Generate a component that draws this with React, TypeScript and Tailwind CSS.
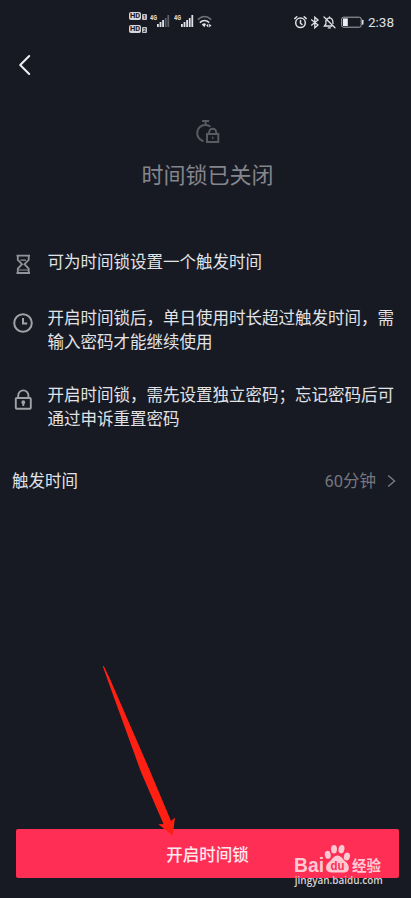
import type { ReactNode } from 'react';

function HdBadge({ slot }: { slot: string }) {
  return (
    <div className="flex h-[9px] items-center gap-[1px]">
      <span className="flex h-[8px] w-[12px] items-center justify-center rounded-[2px] bg-[#d4d6dc] text-[7.5px] leading-[8px] font-bold text-[#171a23]">HD</span>
      <span className="mt-[2px] flex h-[6px] w-[5px] items-center justify-center rounded-[1px] bg-[#c4c6cc] text-[5px] leading-[6px] font-bold text-[#171a23]">{slot}</span>
    </div>
  );
}

function Signal({ strength }: { strength: number }) {
  const bars = [3, 5, 7, 9, 12];
  return (
    <svg className="h-[14px] w-[20px]" viewBox="0 0 20 14" fill="#dfe1e6">
      <text x="0" y="6" fontSize="7" fontWeight="700" textLength="7" lengthAdjust="spacingAndGlyphs">4G</text>
      {bars.map((h, i) => (
        <rect key={h} x={7 + i * 2.6} y={13 - h} width="1.8" height={h} opacity={i < strength ? 1 : 0.35} />
      ))}
    </svg>
  );
}

function StatusBar() {
  return (
    <div className="flex h-11 items-start justify-between pr-[17px] pl-[129px] text-[#dfe1e6]">
      <div className="flex pt-[11px]">
        <div className="flex w-[18px] flex-col gap-[4px]">
          <HdBadge slot="1" />
          <HdBadge slot="2" />
        </div>
        <div className="flex gap-[4px] pt-[3px] pl-[3px]">
          <Signal strength={3} />
          <Signal strength={5} />
          <svg className="-ml-[1px] h-[14px] w-[16px]" viewBox="0 0 16 14" fill="none" stroke="#dfe1e6" strokeWidth="1.5">
            <path d="M.8 5.6Q7.5-.7 14.2 5.6" opacity=".45" />
            <path d="M2.8 8.6Q7.5 4.4 12.2 8.6" />
            <path d="M4.8 10.4Q7.5 8.4 9 10.2L7.3 13.2Z" fill="#dfe1e6" stroke="none" />
            <path d="M11.3 9.8l-2.2 1.8 2.2 1.8zM12.2 9.8l2.3 1.8-2.3 1.8z" fill="#dfe1e6" stroke="none" />
          </svg>
        </div>
      </div>
      <div className="flex items-center pt-[15px]">
        <svg className="h-[13px] w-[13px]" viewBox="0 0 13 13" fill="none" stroke="#dfe1e6" strokeWidth="1.5" strokeLinecap="round">
          <circle cx="6.5" cy="6.8" r="4.8" />
          <path d="M6.5 4.5V7.2L8 8.5M.8 2.6 2.8 .8M12.2 2.6 10.2 .8" />
        </svg>
        <svg className="ml-[3px] h-[13px] w-[10px]" viewBox="0 0 10 13" fill="none" stroke="#dfe1e6" strokeWidth="1.3">
          <path d="M1.2 3.5 8 9 4.8 11.8V1.2L8 4 1.2 9.5" />
        </svg>
        <svg className="ml-[3px] h-[13px] w-[13px]" viewBox="0 0 13 13" fill="none" stroke="#dfe1e6" strokeWidth="1.3" strokeLinecap="round">
          <path d="M1 1 12 11.8M4.3 2.8Q6.5 1 8.7 2.8 10 4 10 7.4M2.9 4.4V8L1.4 10H8.8M5.3 11.9H7.4M6.5 .8V2" />
        </svg>
        <svg className="ml-[5px] h-[13px] w-[23px]" viewBox="0 0 23 13">
          <rect x=".7" y="1.2" width="19.5" height="10" rx="1.8" fill="none" stroke="#a7a9b0" />
          <rect x="2" y="2.4" width="4.8" height="7.6" fill="#eceef2" />
          <rect x="21" y="3.7" width="1.5" height="5" rx=".6" fill="#dfe1e6" />
        </svg>
        <span className="ml-[4px] font-[Roboto,sans-serif] text-[13.5px] leading-[14px]">2:38</span>
      </div>
    </div>
  );
}

function Rule({ icon, children }: { icon: ReactNode; children: ReactNode }) {
  return (
    <li className="flex items-start">
      <div className="flex w-[47.5px] shrink-0 pl-[12px]">{icon}</div>
      <p className="text-[16.5px] leading-6 whitespace-nowrap text-[#e2e3e7]">{children}</p>
    </li>
  );
}

function Watermark() {
  return (
    <svg className="absolute top-[840px] left-[292px] h-[50px] w-[96px]" viewBox="0 0 96 50">
      <g fill="#ffc9d3">
        <text x="2" y="31.5" fontFamily="Liberation Sans, sans-serif" fontSize="19.5" fontWeight="700" textLength="30" lengthAdjust="spacingAndGlyphs">Bai</text>
        <ellipse cx="35.8" cy="14.8" rx="2.9" ry="4" transform="rotate(-12 35.8 14.8)" />
        <ellipse cx="42" cy="9.2" rx="2.9" ry="4.2" />
        <ellipse cx="49.5" cy="9.2" rx="2.9" ry="4.2" transform="rotate(12 49.5 9.2)" />
        <ellipse cx="54.9" cy="16.5" rx="3" ry="4" transform="rotate(15 54.9 16.5)" />
        <path d="M45.5 15.5C41.5 15.5 40.5 19.5 37 22C32.5 25.5 33 32 39 32.5H52.5C58 32 58 25.5 54 22C50.5 19.5 49.5 15.5 45.5 15.5Z" />
        <text x="60" y="30.5" fontFamily="Noto Sans CJK SC, sans-serif" fontSize="15" fontWeight="700" textLength="29" lengthAdjust="spacingAndGlyphs">经验</text>
      </g>
      <text x="38.5" y="30" fontFamily="Liberation Sans, sans-serif" fontSize="12.5" fontWeight="700" fill="#fd3157" textLength="14" lengthAdjust="spacingAndGlyphs">du</text>
      <text x="2.8" y="43.8" fontFamily="Open Sans, sans-serif" fontSize="10" fontWeight="600" fill="#d3d4d7" textLength="88" lengthAdjust="spacingAndGlyphs">jingyan.baidu.com</text>
    </svg>
  );
}

export default function App() {
  return (
    <main className="relative flex h-[898px] w-[411px] flex-col overflow-hidden bg-[#171a23] font-['Roboto','Noto_Sans_CJK_SC',sans-serif]">
      <StatusBar />
      <nav className="flex h-[42px] items-center pl-[18px]">
        <button aria-label="返回">
          <svg className="h-[22px] w-[14px]" viewBox="0 0 14 22" fill="none" stroke="#edeef2" strokeWidth="2" strokeLinecap="round" strokeLinejoin="round">
            <path d="M11.2 2 2.2 11 11.2 20" />
          </svg>
        </button>
      </nav>

      <section className="flex h-[165px] flex-col items-center pt-[33px] pl-[4px] text-[#84868c]">
        <svg className="h-[25px] w-[24px]" viewBox="0 0 24 25" fill="none" stroke="#595b62" strokeWidth="2" strokeLinecap="round">
          <path d="M6.8 2H12.4M9.6 2V5.2M6.8 22C3.6 20.8 1.2 17.8 1.2 13.8C1.2 9.2 4.8 6 9.3 6C11.2 6 12.5 6.3 13.8 7.2" />
          <rect x="11" y="15" width="11.3" height="8" />
          <path d="M13.2 15V13.3A3.5 3.5 0 0 1 20.2 13.3V15" />
          <path d="M16.7 18.2V19.6" strokeWidth="1.3" />
        </svg>
        <h1 className="mt-[16px] text-[22px] leading-8">时间锁已关闭</h1>
      </section>

      <ul className="flex flex-col gap-[29px]">
        <Rule
          icon={
            <svg className="mt-[2px] h-[22px] w-[22px]" viewBox="0 0 22 22" fill="none" stroke="#92949b" strokeWidth="1.8">
              <path d="M4.5 2.6H18M4.5 20H18M5.8 2.6V7L10 11.2L5.8 15.5V20M16.7 2.6V7L12.5 11.2L16.7 15.5V20" />
              <path d="M6.5 17H16M8.5 7.2H14" strokeWidth="1.2" />
            </svg>
          }
        >
          可为时间锁设置一个触发时间
        </Rule>
        <Rule
          icon={
            <svg className="mt-[8px] h-[22px] w-[22px]" viewBox="0 0 22 22" fill="none" stroke="#a0a2a8" strokeWidth="2">
              <circle cx="11" cy="11" r="8.8" />
              <path d="M11 6V11.6H15.2" />
            </svg>
          }
        >
          <span className="block pt-[3px]">开启时间锁后，单日使用时长超过触发时间，需<br />输入密码才能继续使用</span>
        </Rule>
        <Rule
          icon={
            <svg className="mt-[5px] h-[22px] w-[22px]" viewBox="0 0 22 22" fill="none" stroke="#a0a2a8" strokeWidth="1.9">
              <rect x="3.8" y="9" width="15" height="10.8" rx="1" />
              <path d="M6.2 9V6.5A5.1 5.1 0 0 1 16.4 6.5V9M11.3 13.5V17" />
              <circle cx="11.3" cy="13.3" r="1" fill="#a0a2a8" />
            </svg>
          }
        >
          开启时间锁，需先设置独立密码；忘记密码后可<br />通过申诉重置密码
        </Rule>
      </ul>

      <div className="mt-[38px] flex h-6 items-center justify-between pr-[15px] pl-[12px] text-[16.5px] leading-6">
        <span className="text-[#e2e3e7]">触发时间</span>
        <span className="flex items-center gap-[11px] text-[#75777d]">
          60分钟
          <svg className="mb-[3px] h-[14px] w-[9px]" viewBox="0 0 9 14" fill="none" stroke="#75777d" strokeWidth="1.5">
            <path d="M1.2 1.5 7.5 7 1.2 12.5" />
          </svg>
        </span>
      </div>

      <button className="mt-auto mr-[12px] mb-[20px] ml-4 h-[49px] shrink-0 rounded-[2px] bg-[#fe2e55] pt-[4px] text-[16.5px] leading-6 font-medium text-[#ffe8ed]">
        开启时间锁
      </button>

      <svg className="absolute top-[664px] left-[100px] h-[174px] w-[80px]" viewBox="0 0 80 174" fill="#ff2013">
        <path d="M2.8 2.2 3.8 2 10 15 50 107 71 157 75 153.5 72.7 171.5 58.3 160.3 63.5 160 41 108 8 17Z" />
      </svg>
      <Watermark />
    </main>
  );
}
